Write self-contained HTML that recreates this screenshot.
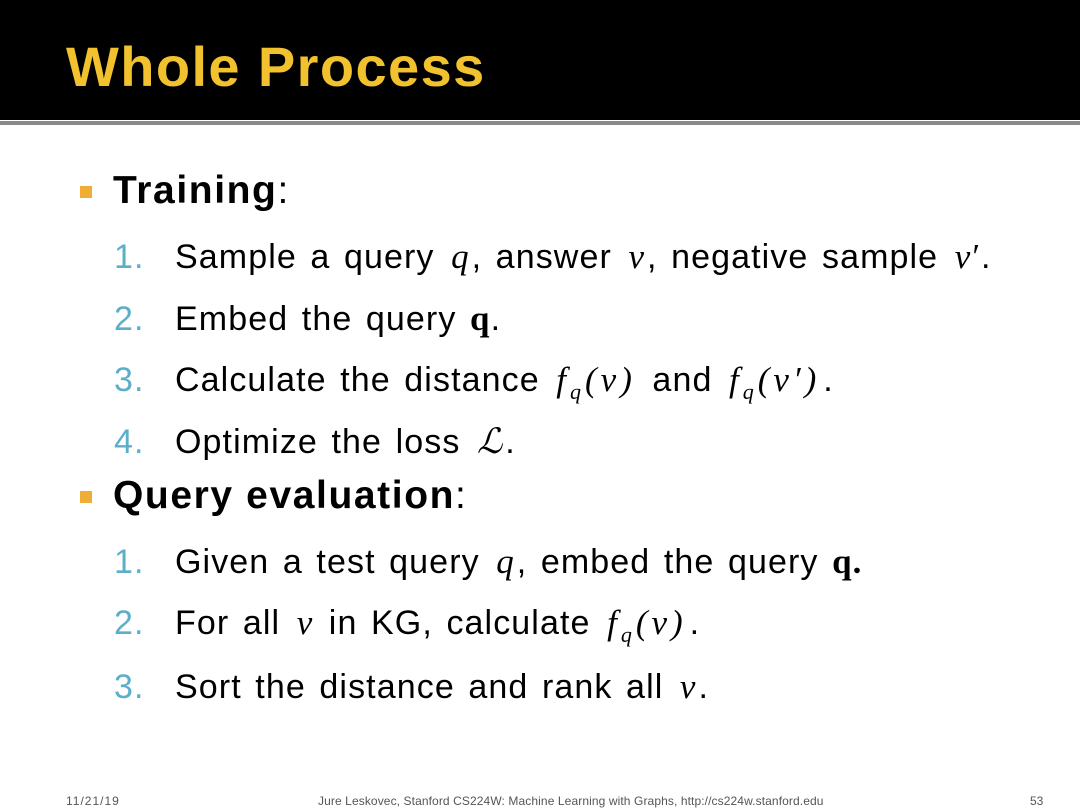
<!DOCTYPE html>
<html><head><style>
body{margin:0;width:1080px;height:810px;background:#fff;position:relative;overflow:hidden;font-family:"Liberation Sans",sans-serif;}
.hdr{position:absolute;left:0;top:0;width:1080px;height:120px;background:#000;}
.title{position:absolute;left:66px;top:34px;font-size:56px;font-weight:bold;color:#F2C12E;letter-spacing:1.4px;}
.line{position:absolute;left:0;top:121px;width:1080px;height:4px;background:#888;}
.t{position:absolute;white-space:nowrap;color:#000;}
.b{font-size:39px;left:113px;letter-spacing:1.6px}
.b b{font-weight:bold}
.sq{position:absolute;left:80px;width:12px;height:12px;background:#F0AD35;}
.i{font-size:34px;left:114px;letter-spacing:1.1px;word-spacing:3px}
.n{color:#5BAFC8;display:inline-block;width:61px}
.m{font-family:"Liberation Serif",serif;font-style:italic;font-size:35px;margin:0 3px;letter-spacing:0}
.fx{letter-spacing:4px}
.mb{font-family:"Liberation Serif",serif;font-weight:bold;font-size:35px}
.f{position:absolute;top:794px;font-size:12px;color:#555;}
</style></head><body>
<div class="hdr"></div>
<div class="title">Whole Process</div>
<div class="line"></div>
<div class="sq" style="top:186px"></div>
<div class="t b" style="top:169px"><b>Training</b>:</div>
<div class="t i" style="top:237px"><span class="n">1.</span>Sample a query <span class="m">q</span>, answer <span class="m">v</span>, negative sample <span class="m">v′</span>.</div>
<div class="t i" style="top:299px"><span class="n">2.</span>Embed the query <span class="mb">q</span>.</div>
<div class="t i" style="top:360px"><span class="n">3.</span>Calculate the distance <span class="m fx">f<sub style="font-size:22px">q</sub>(v)</span> and <span class="m fx">f<sub style="font-size:22px">q</sub>(v′)</span>.</div>
<div class="t i" style="top:422px"><span class="n">4.</span>Optimize the loss <span class="m">ℒ</span>.</div>
<div class="sq" style="top:491px"></div>
<div class="t b" style="top:474px"><b>Query evaluation</b>:</div>
<div class="t i" style="top:542px"><span class="n">1.</span>Given a test query <span class="m">q</span>, embed the query <span class="mb">q.</span></div>
<div class="t i" style="top:603px"><span class="n">2.</span>For all <span class="m">v</span> in KG, calculate <span class="m fx">f<sub style="font-size:22px">q</sub>(v)</span>.</div>
<div class="t i" style="top:667px"><span class="n">3.</span>Sort the distance and rank all <span class="m">v</span>.</div>
<div class="f" style="left:66px;letter-spacing:1px">11/21/19</div>
<div class="f" style="left:318px;letter-spacing:0.1px">Jure Leskovec, Stanford CS224W: Machine Learning with Graphs, http://cs224w.stanford.edu</div>
<div class="f" style="left:1030px">53</div>
</body></html>
